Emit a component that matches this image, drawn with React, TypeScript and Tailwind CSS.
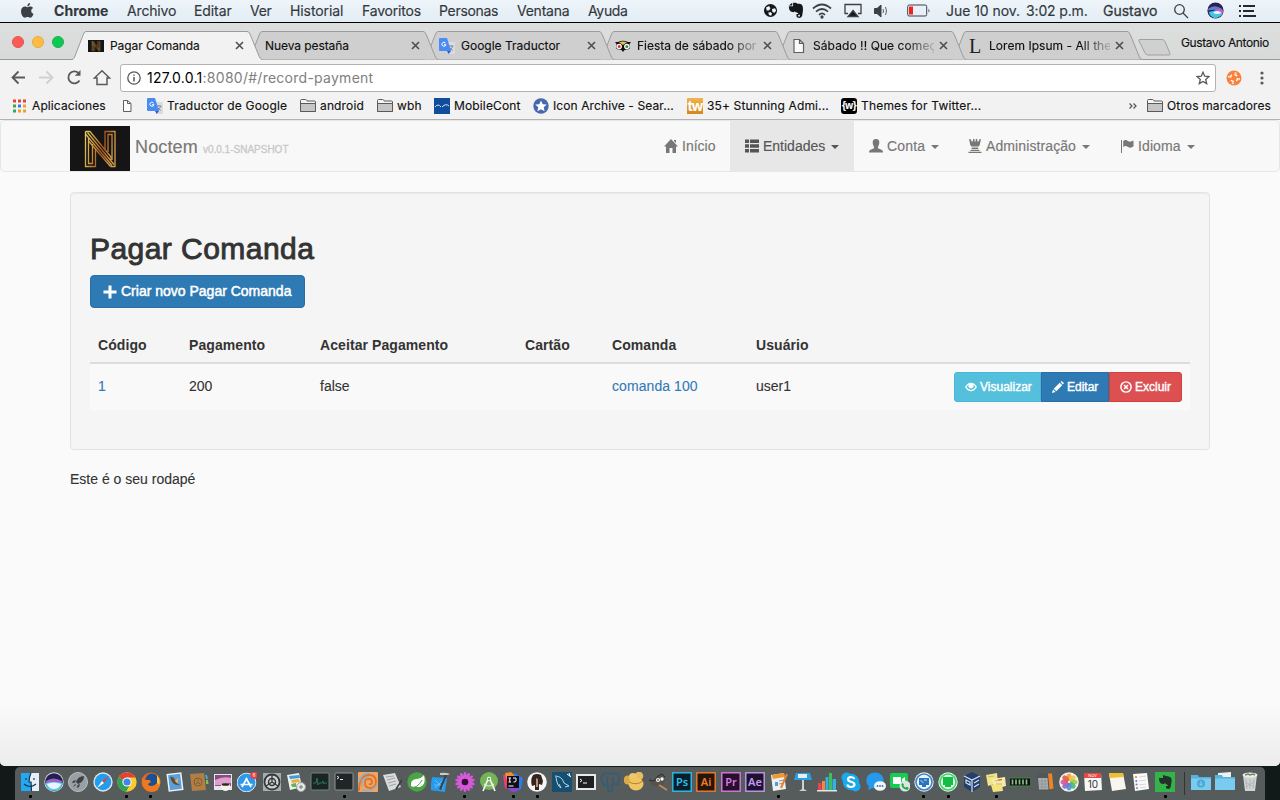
import React from "react";

type Kids = { children?: React.ReactNode };

/* ---------- shared drawing helpers ---------- */

function Ic({ s = 20, className = "", children }: Kids & { s?: number; className?: string }) {
  return (
    <svg width={s} height={s} viewBox="0 0 20 20" fill="none" className={"block shrink-0 " + className}>
      {children}
    </svg>
  );
}

function PageIcon() {
  return (
    <svg width="16" height="16" viewBox="0 0 16 16" className="block shrink-0" fill="#fafafa" stroke="#5f5f5f" strokeWidth="1.2">
      <path d="M3 1.500h5.500l4 4V14.500H3z M8.500 1.500v4h4" />
    </svg>
  );
}

function Folder() {
  return (
    <svg width="16" height="14" viewBox="0 0 16 14" className="block shrink-0" stroke="#5a5a5a">
      <path d="M.5 12.5v-11q0-1 1-1h4q1 0 1.300 1l.2.5h7.500q1 0 1 1v9.500z" fill="#f4f4f4" />
      <path d="M.5 12.500V4.500h15v8z" fill="#c6c6c6" />
    </svg>
  );
}

function Translate() {
  return (
    <svg width="16" height="16" viewBox="0 0 16 16" className="block shrink-0">
      <path d="M8 4h7q1 0 1 1v10q0 1-1 1h-5z" fill="#dcdcdc" />
      <path d="M9.500 8h5M12 7v1.200M13.800 8q-.8 3.200-3.500 4.500M10.300 9q1.500 2.700 3.500 3.500" stroke="#7690a8" fill="none" />
      <path d="M1 0h7l4 13H1q-1 0-1-1V1q0-1 1-1z" fill="#4b8bf5" />
      <path d="M8 13h4l-2.300 3z" fill="#3a55c8" />
      <path d="M6.500 5a2 2 0 1 0 .4 1.700H5" stroke="#fff" strokeWidth="1" fill="none" />
    </svg>
  );
}

function LogoN({ className }: { className: string }) {
  return (
    <svg viewBox="0 0 60 45" className={"block shrink-0 " + className}>
      <defs>
        <linearGradient id="gold" gradientUnits="userSpaceOnUse" x1="14" y1="5" x2="46" y2="12">
          <stop offset="0" stopColor="#ecd468" />
          <stop offset=".35" stopColor="#cf9a3e" />
          <stop offset=".65" stopColor="#a8561d" />
          <stop offset="1" stopColor="#d9a04b" />
        </linearGradient>
      </defs>
      <rect width="60" height="45" fill="#151515" />
      <g stroke="url(#gold)" strokeWidth="1.300" fill="none">
        <path d="M15.500 5.500V40.500H25.500V22" />
        <path d="M18.500 12V37.500H22.500V18" />
        <path d="M15.500 5.500H20L41 31V34" />
        <path d="M15.500 8L42 39.500M17.500 6.500L44 38.500M18.500 15L40.500 40.500" />
        <path d="M35 23V5.500H45V40.500H40.500" />
        <path d="M38 26V8.500H42V34" />
      </g>
    </svg>
  );
}

/* ---------- macOS menu bar ---------- */

function MenuBar() {
  return (
    <div className="flex h-[23px] items-center border-b border-black bg-gradient-to-b from-[#edf4fa] to-[#e4edf4] pb-[1px] pl-[20px] text-[14px] text-[#33383d] [-webkit-text-stroke:0.15px]">
      <svg width="34" height="17" viewBox="0 0 34 16" className="shrink-0" fill="#3b4045">
        <path d="M11.200 8.500c0-1.500 1-2.400 1.900-2.900-.8-1.200-2-1.500-2.800-1.500-1.200 0-2.200.7-2.800.7s-1.500-.7-2.500-.7C3 4.100 1 5.700 1 8.700c0 3.200 2.100 6.500 3.900 6.500.9 0 1.400-.6 2.600-.6s1.600.6 2.600.6c1.500 0 2.900-2.300 3.400-3.800-1.500-.6-2.300-1.700-2.300-2.900zM10 .5C8.500.7 7.200 2 7.400 3.700 9 3.700 10.200 2.200 10 .5z" />
      </svg>
      <span className="w-[73px] font-bold tracking-[0.05px]">Chrome</span>
      <span className="w-[67px] tracking-[-0.15px]">Archivo</span>
      <span className="w-[56px] tracking-[-0.1px]">Editar</span>
      <span className="w-[40px] tracking-[-0.3px]">Ver</span>
      <span className="w-[72px] tracking-[-0.1px]">Historial</span>
      <span className="w-[77px] tracking-[-0.2px]">Favoritos</span>
      <span className="w-[78px] tracking-[-0.3px]">Personas</span>
      <span className="w-[71px] tracking-[-0.25px]">Ventana</span>
      <span className="w-[175px] tracking-[-0.35px]">Ayuda</span>
      <Ic s={15} className="mr-[10px]">
        <circle cx="10" cy="10" r="8.700" fill="#15181b" />
        <path d="M4 6l4-2 2 3-2 3-3 0zM12 8l4-1 1.500 3-2 3-3-1zM7 13l3-1 2 2-1 3-3-1z" fill="#edf4fa" />
      </Ic>
      <Ic s={17} className="mr-[7px]">
        <path d="M6 1v4H1c0 5 2 7 6 7l1-1c1 2 4 1 4 3h-2v3c2 3 7 2 7-3 1-5 1-9-1-11-2-1-3-1-5-1-1-1-3-1-5-1zM5 1L1 4h4z" fill="#15181b" />
        <path d="M12 15h2v2h-2z" fill="#edf4fa" />
      </Ic>
      <svg width="20" height="16" viewBox="0 0 20 16" className="mr-[12px] shrink-0" fill="none" stroke="#3b4045" strokeWidth="1.700">
        <path d="M1 5.500q9-8 18 0M4 8.700q6-5.400 12 0M7 11.800q3-2.700 6 0" />
        <circle cx="10" cy="14" r=".8" fill="#3b4045" />
      </svg>
      <svg width="18" height="15" viewBox="0 0 18 15" className="mr-[12px] shrink-0" fill="none" stroke="#3b4045" strokeWidth="1.300">
        <path d="M4 10.500H1V1.500h16v9h-3" />
        <path d="M9 7.500l5 6H4z" fill="#15181b" />
      </svg>
      <svg width="16" height="14" viewBox="0 0 16 14" className="mr-[17px] shrink-0" fill="none" stroke="#3b4045">
        <path d="M.5 4.500h2.500l4-3.500v12l-4-3.500h-2.500z" fill="#3b4045" />
        <path d="M9 5q1 2 0 4M11.500 3q2 4 0 8" opacity=".8" />
      </svg>
      <svg width="24" height="13" viewBox="0 0 24 13" className="mr-[15px] shrink-0" fill="none" stroke="#3b4045">
        <rect x=".7" y="1" width="19" height="11" rx="1.500" />
        <path d="M2 2.500h4v8H2z" fill="#ee2424" stroke="none" />
        <path d="M21.500 4.500v4q1.800-2 0-4z" fill="#3b4045" stroke="none" />
      </svg>
      <span className="w-[80px] whitespace-nowrap tracking-[-0.05px]">Jue 10 nov.</span>
      <span className="w-[77px] whitespace-nowrap tracking-[-0.15px]">3:02 p.m.</span>
      <span className="w-[70px] [-webkit-text-stroke:0.3px]">Gustavo</span>
      <svg width="16" height="16" viewBox="0 0 16 16" className="mr-[18px] shrink-0" fill="none" stroke="#3b4045" strokeWidth="1.300">
        <circle cx="6.500" cy="6.500" r="4.800" />
        <path d="M10 10l5 5" />
      </svg>
      <Ic s={17}>
        <circle cx="10" cy="10" r="9.500" fill="#2a2350" />
        <path d="M1.500 8q7-6 16 0l1 2q-9-2-17 0z" fill="#5b7fd8" />
        <path d="M7 11q6-5 12-1l-1 5q-4 3-8 2z" fill="#c95fd0" />
        <path d="M2 12q7-3 16 1-2 5-8 6-6-1-8-7z" fill="#42c4e6" />
        <path d="M7 12.500q5-4 10 0-5 3-10 0z" fill="#eefaff" />
      </Ic>
      <svg width="20" height="14" viewBox="0 0 20 14" className="ml-[14px] shrink-0" stroke="#25292d" strokeWidth="1.800">
        <path d="M1 2h2M5 2h12M1 7h2M5 7h11M1 12h2M5 12h13" />
      </svg>
    </div>
  );
}

/* ---------- browser tabs ---------- */

function Close() {
  return (
    <svg width="9" height="9" viewBox="0 0 9 9" className="block shrink-0" stroke="#4f4f4f" strokeWidth="1.600">
      <path d="M1 1l7 7M8 1L1 8" />
    </svg>
  );
}

function Tab({ title, icon, active, fade, z, spacing = "" }: { title: string; icon?: React.ReactNode; active?: boolean; fade?: boolean; z: string; spacing?: string }) {
  return (
    <div className={"relative flex h-[29px] w-[176px] shrink-0 items-center pl-[16px] " + z}>
      <svg width="192" height="29" viewBox="0 0 192 29" className="absolute left-0 top-0">
        <path
          d="M0 28.500C2 28 2 27 3 25L11.500 3Q12.500.5 14 .5H175Q177 .5 178 3L187 25Q188 28 190 28.500"
          fill={active ? "#f2f2f2" : "#cfcfcf"}
          stroke="#9b9b9b"
        />
        {active && <path d="M1 28.500H189" stroke="#f2f2f2" />}
      </svg>
      <div className="relative flex w-full items-center">
        {icon && <div className={"flex w-[16px] justify-center " + (active ? "mr-[6px]" : "-ml-[1px] mr-[6px]")}>{icon}</div>}
        <span
          className={
            "whitespace-nowrap text-[12px] text-[#111] [-webkit-text-stroke:0.15px] " + spacing +
            (icon ? (active ? " w-[120px]" : " w-[121px]") : " ml-[1px] w-[141px]") +
            (fade ? " [mask-image:linear-gradient(to_right,black_92px,transparent_126px)]" : "")
          }
        >
          {title}
        </span>
        <span className="ml-[5px]"><Close /></span>
      </div>
    </div>
  );
}

const Owl = (
  <svg width="16" height="12" viewBox="0 0 16 12">
    <path d="M0 2h3q5-2.500 10 0h3l-1.500 2v5l-5 1L8 12l-1.500-2-5-1V4z" fill="#111" />
    <path d="M4 2.300q4-1.500 8 0L8 5z" fill="#e7c34e" />
    <circle cx="4.200" cy="6.500" r="2.700" fill="#fff" />
    <circle cx="11.800" cy="6.500" r="2.700" fill="#fff" />
    <circle cx="4.200" cy="6.500" r="1.500" fill="#d43c32" />
    <circle cx="11.800" cy="6.500" r="1.500" fill="#2f9456" />
  </svg>
);

function TabStrip() {
  return (
    <div className="flex h-[37px] items-end bg-gradient-to-b from-[#dddfdf] to-[#d8d9d9] shadow-[inset_0_-1px_0_#9b9b9b]">
      <div className="flex w-[72px] shrink-0 items-center gap-[8px] self-start pl-[12px] pt-[13px]">
        <i className="size-[12px] rounded-full border border-[#e8504c] bg-[#fc5b57]" />
        <i className="size-[12px] rounded-full border border-[#eaaa40] bg-[#fdbc40]" />
        <i className="size-[12px] rounded-full border border-[#10b64b] bg-[#0fc854]" />
      </div>
      <Tab z="z-[6]" active title="Pagar Comanda" spacing="tracking-[-0.08px]" icon={<LogoN className="h-[12px] w-[16px]" />} />
      <Tab z="z-[5]" title="Nueva pestaña" spacing="tracking-[-0.08px]" />
      <Tab z="z-[4]" title="Google Traductor" icon={<Translate />} />
      <Tab z="z-[3]" fade title="Fiesta de sábado por" icon={Owl} />
      <Tab z="z-[2]" fade title="Sábado !! Que começ" spacing="tracking-[0.08px]" icon={<PageIcon />} />
      <Tab z="z-[1]" fade title="Lorem Ipsum - All the" spacing="tracking-[0.04px]" icon={<span className="font-['Liberation_Serif',serif] text-[20px] leading-[18px] text-[#222]">L</span>} />
      <svg width="35" height="29" viewBox="0 0 35 29" className="ml-[10px] shrink-0">
        <path d="M2 8.500h22q2 0 3 2l5 12q.5 1.500-1 1.500H10q-2 0-3-2L1 10q-.6-1.500 1-1.500z" fill="#d0d0d0" stroke="#a0a0a0" />
      </svg>
      <span className="ml-[8px] self-start whitespace-nowrap pt-[12px] text-[12px] leading-[16px] tracking-[-0.38px] text-[#111] [-webkit-text-stroke:0.15px]">Gustavo Antonio</span>
    </div>
  );
}

/* ---------- toolbar and bookmarks ---------- */

function Toolbar() {
  return (
    <div className="flex h-[33px] items-center bg-[#f2f2f2] pl-[10px] pt-[2px]">
      <svg width="110" height="20" viewBox="0 0 110 20" className="shrink-0" fill="none" stroke="#5a5a5a" strokeWidth="1.800">
        <path d="M15 9.500H2.500M8.500 3.500l-6 6 6 6" />
        <path d="M29 9.500h13M36.500 3.500l6 6-6 6" stroke="#d0d0d0" />
        <path d="M69.500 12.500a6 6 0 1 1-1-7.500" />
        <path d="M70.500 2v5.700h-5.700z" fill="#5a5a5a" stroke="none" />
        <path d="M84.500 10L92 2.800 99.500 10H97v6.500H87V10z" strokeWidth="1.500" />
      </svg>
      <div className="flex h-[28px] w-[1096px] shrink-0 items-center rounded-[3px] border border-[#b2b2b2] bg-white pl-[6px]">
        <svg width="14" height="14" viewBox="0 0 14 14" fill="none" stroke="#555" strokeWidth="1.300">
          <circle cx="7" cy="7" r="6.200" />
          <path d="M7 6v4.500M7 3.500v1.300" strokeWidth="1.500" />
        </svg>
        <span className="ml-[6px] text-[14px] tracking-[0.26px] text-[#808080]">
          <span className="text-black">127.0.0.1</span>:8080/#/record-payment
        </span>
        <svg width="14" height="14" viewBox="0 0 14 14" className="ml-auto mr-[5px]" fill="none" stroke="#5a5a5a" strokeWidth="1.300">
          <path d="M7 1.200l1.700 4 4.300.4-3.300 2.800 1 4.200L7 10.400l-3.700 2.200 1-4.200L1 5.600l4.300-.4z" />
        </svg>
      </div>
      <svg width="16" height="16" viewBox="0 0 16 16" className="ml-[10px] shrink-0">
        <circle cx="8" cy="8" r="7.500" fill="#f9813a" />
        <circle cx="8" cy="8" r="3.600" fill="none" stroke="#fff" strokeWidth="1.500" strokeDasharray="3.150 2.500" />
        <circle cx="8" cy="8" r="5.300" fill="none" stroke="#fff" strokeWidth="1.200" strokeDasharray="2 6.330" />
      </svg>
      <svg width="4" height="14" viewBox="0 0 4 14" className="ml-[18px] shrink-0" fill="#5a5a5a">
        <circle cx="2" cy="2" r="1.600" />
        <circle cx="2" cy="7" r="1.600" />
        <circle cx="2" cy="12" r="1.600" />
      </svg>
    </div>
  );
}

function Mark({ icon, text, className }: { icon: React.ReactNode; text?: string; className: string }) {
  return (
    <div className={"flex shrink-0 items-center gap-[4px] whitespace-nowrap " + className}>
      {icon}
      <span>{text}</span>
    </div>
  );
}

function Bookmarks() {
  const colors = ["#ea4335", "#ea4335", "#ea4335", "#34a853", "#3178e6", "#f0a02c", "#34a853", "#f0a02c", "#f0a02c"];
  return (
    <div className="flex h-[27px] items-center border-b border-[#b3b3b3] bg-[#f2f2f2] pl-[12px] text-[12px] tracking-[0.14px] text-[#111] [-webkit-text-stroke:0.15px]">
      <Mark
        className="w-[107px] tracking-[0.1px]"
        text="Aplicaciones"
        icon={
          <svg width="16" height="14" viewBox="0 0 16 14">
            {colors.map((c, i) => (
              <rect key={i} x={1 + (i % 3) * 5} y={Math.floor(i / 3) * 5 + 0.5} width="3" height="3" fill={c} />
            ))}
          </svg>
        }
      />
      <Mark
        className="w-[28px]"
        icon={
          <svg width="16" height="14" viewBox="0 0 16 14" fill="#fafafa" stroke="#5f5f5f">
            <path d="M4.500 1.500h4l3.500 3v8h-7.500z M8.500 1.500v3H12" />
          </svg>
        }
      />
      <Mark className="w-[153px] tracking-[0.18px]" text="Traductor de Google" icon={<Translate />} />
      <Mark className="w-[77px]" text="android" icon={<Folder />} />
      <Mark className="w-[57px]" text="wbh" icon={<Folder />} />
      <Mark
        className="w-[99px]"
        text="MobileCont"
        icon={
          <svg width="16" height="16" viewBox="0 0 16 16">
            <path d="M0 0h16v16H0z" fill="#104d9c" />
            <path d="M1 9q3-4 6 0M8 9q4-4 7-1" stroke="#dbe7f5" fill="none" />
          </svg>
        }
      />
      <Mark
        className="w-[154px] tracking-[0.1px]"
        text="Icon Archive - Sear..."
        icon={
          <svg width="16" height="16" viewBox="0 0 16 16">
            <circle cx="8" cy="8" r="7.700" fill="#4767ae" />
            <path d="M8 2.500l1.700 3.700 4 .4-3 2.700.9 4L8 11.300l-3.600 2 .9-4-3-2.700 4-.4z" fill="#fff" />
          </svg>
        }
      />
      <Mark
        className="w-[154px]"
        text="35+ Stunning Admi..."
        icon={<span className="flex size-[16px] items-center justify-center bg-gradient-to-b from-[#efb450] to-[#d58718] font-['Liberation_Sans',sans-serif] text-[14px] font-bold leading-[16px] tracking-[-0.5px] text-white">tw</span>}
      />
      <Mark
        className="w-[286px] tracking-[0.18px]"
        text="Themes for Twitter..."
        icon={<span className="flex size-[16px] items-center justify-center rounded-[3px] bg-black font-['Liberation_Sans',sans-serif] text-[10px] font-bold leading-[16px] tracking-[-0.5px] text-white">{"{w}"}</span>}
      />
      <svg width="20" height="12" viewBox="0 0 20 12" fill="none" stroke="#5a5a5a" strokeWidth="1.300" className="shrink-0">
        <path d="M2.500 3.500L5 6 2.500 8.500M6.500 3.500L9 6 6.500 8.500" />
      </svg>
      <Mark className="" text="Otros marcadores" icon={<Folder />} />
    </div>
  );
}

/* ---------- application page ---------- */

function Glyph({ children, s = 14 }: Kids & { s?: number }) {
  return (
    <svg width={s} height={s} viewBox="0 0 14 14" className="block shrink-0" fill="currentColor">
      {children}
    </svg>
  );
}

function NavItem({ icon, text, caret = true, className }: { icon: React.ReactNode; text: string; caret?: boolean; className: string }) {
  return (
    <a className={"flex h-[50px] items-center pl-[14px] " + className}>
      {icon}
      <span className="ml-[4px]">{text}</span>
      {caret && <i className="ml-[6px] mt-[2px] border-x-4 border-t-4 border-x-transparent border-t-current" />}
    </a>
  );
}

function Navbar() {
  return (
    <nav className="flex h-[52px] justify-between rounded-[4px] border border-[#e7e7e7] bg-[#f8f8f8] px-[69px] text-[14px] text-[#777] [-webkit-text-stroke:0.15px]">
      <div className="flex items-start pt-[5px]">
        <LogoN className="h-[45px] w-[60px]" />
        <div className="flex items-baseline pl-[5px] pt-[7px]">
          <span className="text-[18px] leading-[28px] tracking-[0.15px]">Noctem</span>
          <span className="ml-[5px] text-[10px] text-[#c8c8c8] [-webkit-text-stroke:0.3px]">v0.0.1-SNAPSHOT</span>
        </div>
      </div>
      <div className="flex">
        <NavItem
          className="w-[81px]"
          caret={false}
          text="Início"
          icon={<span className="ml-[1px]"><Glyph><path d="M7 0l7 7.500h-2V14H8.500V9h-3v5H2V7.500H0zM10 1h2v3l-2-2z" /></Glyph></span>}
        />
        <NavItem
          className="w-[124px] bg-[#e7e7e7] text-[#555]"
          text="Entidades"
          icon={<span className="ml-[1px]"><Glyph><path d="M0 .5h4v3.500H0zM5 .5h9v3.500H5zM0 5.200h4v3.500H0zM5 5.200h9v3.500H5zM0 10h4v3.500H0zM5 10h9v3.500H5z" /></Glyph></span>}
        />
        <NavItem
          className="w-[100px] tracking-[0.2px]"
          text="Conta"
          icon={<span className="ml-[1px]"><Glyph><path d="M7 0c2.500 0 3.500 1.500 3.300 4-.2 2-1 3-1.300 3.800v1.500L13 11q1 .7 1 2.500H0q0-1.800 1-2.500l4-1.700V7.800C4.600 7 3.900 6 3.700 4 3.500 1.500 4.500 0 7 0z" /></Glyph></span>}
        />
        <NavItem
          className="w-[152px] tracking-[0.1px]"
          text="Administração"
          icon={<Glyph><path d="M1 0l2 .5.5 2h1.300L5 0h1.400l.2 2.500h1L7.800 0h1.400l.2 2.500h1.300l.5-2L13 0l-1.300 6-1 1.500h-7.400l-1-1.500zM4 8.500h6l.7 1.800H3.300zM2.500 11h9v1h-9zM.500 12.700h13V14H.5z" /></Glyph>}
        />
        <NavItem
          className="w-[104px] tracking-[0.1px]"
          text="Idioma"
          icon={<Glyph><path d="M1 1h1v13H1zM3.200 2q2.300-2 4.800 0 2 1.500 5.500-.5v6q-3 2-5.500.5-2.500-2-4.800 0z" /></Glyph>}
        />
      </div>
    </nav>
  );
}

const medium = "[-webkit-text-stroke:0.5px]";

function Content() {
  const btn = "flex h-[30px] items-center gap-[3px] border text-[12px] text-white [-webkit-text-stroke:0.4px] ";
  return (
    <main className="mx-[70px] mt-[20px] h-[258px] rounded-[4px] border border-[#e3e3e3] bg-[#f5f5f5] px-[19px] pt-[39px] text-[14px] text-[#333] shadow-[inset_0_1px_1px_rgba(0,0,0,0.05)]">
      <h2 className="text-[30px] leading-[33px] tracking-[0.45px] [-webkit-text-stroke:0.9px]">Pagar Comanda</h2>
      <button className={"mt-[10px] flex h-[33px] w-[215px] items-center rounded-[4px] border border-[#2e6da4] bg-[#2e7ab4] pl-[12px] text-[14px] text-white " + medium}>
        <svg width="14" height="14" viewBox="0 0 14 14" stroke="#fff" strokeWidth="3">
          <path d="M7 .5v13M.5 7h13" />
        </svg>
        <span className="ml-[4px] whitespace-nowrap">Criar novo Pagar Comanda</span>
      </button>
      <table className="mt-[20px] w-[1100px] table-fixed border-collapse text-left">
        <colgroup>
          <col className="w-[91px]" />
          <col className="w-[131px]" />
          <col className="w-[205px]" />
          <col className="w-[87px]" />
          <col className="w-[144px]" />
          <col />
          <col className="w-[244px]" />
        </colgroup>
        <thead>
          <tr className="h-[35px] border-b-2 border-[#ddd]">
            {["Código", "Pagamento", "Aceitar Pagamento", "Cartão", "Comanda", "Usuário", ""].map((h, i) => (
              <th key={i} className="px-[8px] pt-[1px] font-bold tracking-[0.08px]">{h}</th>
            ))}
          </tr>
        </thead>
        <tbody>
          <tr className="h-[47px] bg-[#f9f9f9] [-webkit-text-stroke:0.1px]">
            <td className="px-[8px] pb-[1px] text-[#337ab7]">1</td>
            <td className="px-[8px] pb-[1px]">200</td>
            <td className="px-[8px] pb-[1px]">false</td>
            <td />
            <td className="px-[8px] pb-[1px] tracking-[0.08px] text-[#337ab7]">comanda 100</td>
            <td className="px-[8px] pb-[1px]">user1</td>
            <td className="px-[8px] pb-[1px]">
              <div className="flex">
                <button className={btn + "w-[87px] rounded-l-[3px] border-[#46b8da] bg-[#54c0dc] pl-[10px]"}>
                  <Glyph s={12}>
                    <path fillRule="evenodd" d="M0 7q3-5 7-5t7 5q-3 5-7 5T0 7zm1.800 0q2 3.500 5.200 3.500T12.200 7Q11 5 9.800 4.200 11 8.500 7 8.800 3 8.500 4.200 4.200 3 5 1.800 7z" />
                    <circle cx="7" cy="6" r="1.600" />
                  </Glyph>
                  <span>Visualizar</span>
                </button>
                <button className={btn + "w-[68px] border-[#2e6da4] bg-[#2e7ab4] pl-[10px]"}>
                  <Glyph s={12}><path d="M0 14l1.200-4.200 3 3zM2 9l7-7 3 3-7 7zM10 1.300L11.300 0 14 2.700 12.700 4z" /></Glyph>
                  <span>Editar</span>
                </button>
                <button className={btn + "w-[73px] rounded-r-[3px] border-[#d43f3a] bg-[#dc5052] pl-[10px]"}>
                  <Glyph s={12}>
                    <circle cx="7" cy="7" r="6" fill="none" stroke="currentColor" strokeWidth="1.700" />
                    <path d="M4.700 4.700l4.600 4.600M9.300 4.700L4.700 9.300" stroke="currentColor" strokeWidth="1.800" />
                  </Glyph>
                  <span>Excluir</span>
                </button>
              </div>
            </td>
          </tr>
        </tbody>
      </table>
    </main>
  );
}

/* ---------- dock ---------- */

function Adobe({ t, c, bg }: { t: string; c: string; bg: string }) {
  return (
    <>
      <rect x=".8" y=".8" width="18.400" height="18.400" fill={bg} stroke={c} strokeWidth="1.400" />
      <text x="10" y="14" textAnchor="middle" fontSize="11" fontWeight="600" fontFamily="Noto Sans, sans-serif" fill={c}>{t}</text>
    </>
  );
}

const dock: React.ReactNode[] = [
  <><path d="M1 1h18v18H1z" fill="#e6eff7" /><path d="M1 1h10q-2 4-2 9h2l.5 9H1z" fill="#23a8f2" /><path d="M6 6v2M14 6v2M4 12q6 5 12 0M11 1q-2 4-2 9h2l.5 9" stroke="#17354f" strokeWidth="1.200" /></>,
  <><circle cx="10" cy="10" r="9.700" fill="#d9dce6" /><circle cx="10" cy="10" r="8.800" fill="#251e50" /><path d="M2 9q7-5 16 0l-1 4H3z" fill="#9a62c8" /><path d="M1.500 11q8-2 17 0-1 7.500-8.500 7.700T1.500 11z" fill="#58cbe6" /><path d="M3 12q7-3 14 0-2 5-7 5t-7-5z" fill="#e8f6fc" /></>,
  <><circle cx="10" cy="10" r="9.500" fill="#98a0a3" stroke="#bac0c2" /><path d="M16 4q-6 0-8 6l2 2q6-2 6-8zM8 8l-3 1-1 2 3-.5M12 12l-1 3-2 1 .5-3M7 12l-2 3 3-2z" fill="#3a4044" /></>,
  <><circle cx="10" cy="10" r="9.700" fill="#dfe5e9" /><circle cx="10" cy="10" r="8.300" fill="#229ceb" /><path d="M16 4l-7 5 2 2z" fill="#e93d35" /><path d="M4 16l5-7 2 2z" fill="#fff" /></>,
  <><circle cx="10" cy="10" r="9.700" fill="#f8cb33" /><path d="M10 10L1.600 5.200A9.700 9.700 0 0 1 18.500 5.500H10z" fill="#e04335" /><path d="M10 10L1.600 5.200A9.700 9.700 0 0 0 9 19.700l4-7z" fill="#2fa353" /><circle cx="10" cy="10" r="4.600" fill="#fff" /><circle cx="10" cy="10" r="3.600" fill="#4384ee" /></>,
  <><circle cx="10" cy="10" r="9.500" fill="#e2691d" /><circle cx="11" cy="8" r="6.500" fill="#1c4f94" /><path d="M1 5q1 3 4 3 4-1 5 2-3 1-3 3 5 3 10-3l2-4q2 14-9 14Q0 19 1 5z" fill="#f0781e" /><path d="M16 3q4 5 2 10l-2-2z" fill="#f9c33a" /></>,
  <><g transform="rotate(-7 10 10)"><path d="M2.500 1h15v18h-15z" fill="#eef3f7" /><path d="M4 2.500h12v15H4z" fill="#5b9fd9" /><path d="M6 4q4 1 4.500 5l4 5-5-1.500Q6 10 6 4z" fill="#6a4a2d" /><path d="M10 9l4-3-1.500 6z" fill="#d6b37a" /></g></>,
  <><path d="M1 2l14-1 2 17-14 1z" fill="#b07f45" /><path d="M16 3h2l1 4h-2z" fill="#4ba8d8" /><path d="M17 8h2l.5 4H17z" fill="#8dbb50" /><circle cx="9" cy="10" r="4" stroke="#855a2c" /><path d="M7 12q2-3 4 0M9 7.500v2" stroke="#855a2c" /></>,
  <><path d="M1 2h18v16H1z" fill="#e9e4ea" /><path d="M2 3h16v11H2z" fill="#8a4a86" /><path d="M2 8q8-4 16-2v5L8 13H2z" fill="#dca0cc" /><path d="M8 12h9v3q-1 4-4.500 4T8 15z" fill="#f2f2f2" /><ellipse cx="12.500" cy="12.500" rx="4" ry="1.300" fill="#3b2417" /></>,
  <><circle cx="9.500" cy="10.500" r="9.300" fill="#2e99ea" stroke="#dbe9f4" /><path d="M5 15l5-9M14 15L9 6M3.500 12.500h12" stroke="#fff" strokeWidth="1.700" /><circle cx="17" cy="3.200" r="3.600" fill="#ef3b3b" /><text x="17" y="5" fontSize="5" textAnchor="middle" fill="#fff">6</text></>,
  <><rect x="1" y="1" width="18" height="18" fill="#a6abae" /><circle cx="10" cy="10" r="7.500" fill="#d0d3d5" stroke="#34383a" strokeWidth="1.800" /><circle cx="10" cy="10" r="3.500" stroke="#34383a" strokeWidth="1.500" /><path d="M10 10V3M10 10l6 4M10 10l-6 4" stroke="#34383a" strokeWidth="1.300" /></>,
  <><path d="M1 3l12-2 3 14-12 3z" fill="#eef2ee" /><path d="M3 4l10-1 1 3-10 1z" fill="#3f9bdd" /><path d="M5 8l8-1 1 3-8 1z" fill="#efac3e" /><path d="M5 12l5-1v4H6z" fill="#62b457" /><circle cx="15" cy="15" r="4.500" fill="#e5e7e8" stroke="#9ca1a4" /><path d="M13 15h4M15 13v4" stroke="#777" /></>,
  <><rect x="1" y="1" width="18" height="17" rx="1" fill="#182522" stroke="#76817e" /><path d="M3 11h3l1-5 1 7 1-2h3l1-2 1 3 1-1h2" stroke="#348263" strokeWidth=".8" /></>,
  <><rect x="1" y="1" width="18" height="17" rx="1" fill="#222527" stroke="#8d9493" /><path d="M3 4l2 1.500L3 7M6 7.500h3" stroke="#eee" /></>,
  <><rect x="0" y="0" width="20" height="20" rx="1" fill="#efa563" /><path d="M1 19Q1 3 11 3q7 0 7 6.500T12 16q-5 0-5-5t4-4q3 0 3 3t-3 2" stroke="#e2712a" strokeWidth="1.800" /><path d="M1 10Q3 1 12 1M4 18q9 3 15-5M4 15Q3 6 11 5" stroke="#8fb0c8" strokeWidth="1.600" /></>,
  <><path d="M1 3l12-2 6 14-12 4z" fill="#dadcdc" /><path d="M4 5l8-1M5 8l8-2M6 11l8-2M7 14l7-2" stroke="#9da2a4" /><path d="M20 8l-6 9" stroke="#3a3e40" strokeWidth="1.600" /></>,
  <><circle cx="10" cy="10" r="9.700" fill="#4ba545" /><path d="M17 3q3 13-8 12-4 0-5-1Q3 8 9 7q5 0 8-4z" fill="#fff" /><path d="M3 16q8 0 12-8" stroke="#4ba545" /></>,
  <><path d="M1 5l15 1-2 14L-1 18z" fill="#289bea" /><path d="M4 8l8 8M12 8l-8 8M3 13h10" stroke="#77c2f5" strokeWidth=".8" /><path d="M9 2q6-2 10 1l-3 0-6 15-2-1 6-14z" fill="#3a4146" /><path d="M9 1q5-1 10 1l-2 1-8 0z" fill="#c7ccce" /></>,
  <>{Array.from({ length: 14 }, (_, i) => <ellipse key={i} cx="10" cy="4.500" rx="1.600" ry="4.500" fill="#d758dc" transform={`rotate(${i * 25.714} 10 10)`} />)}<circle cx="10" cy="10" r="3.300" fill="#33102f" /></>,
  <><circle cx="10" cy="9" r="9" fill="#75b356" /><path d="M10 5L4 19M10 5l6 14" stroke="#f4f4f4" strokeWidth="1.700" /><path d="M5 12q5 4 10 0" stroke="#e8e8e8" strokeWidth="1.200" /><circle cx="10" cy="7" r="2.200" fill="#f0f3ee" /><circle cx="10" cy="7" r="1" fill="#5b8a44" /></>,
  <><path d="M0 3l9-2 2 12-9 4z" fill="#ee3d6e" /><path d="M2 1l6-1 4 4-9 3z" fill="#f28b3a" /><path d="M11 1l9 5-2 11-7 3z" fill="#2e7cea" /><path d="M2 14l7 6 7-2-5-5z" fill="#9345d2" /><path d="M4 4h12v12H4z" fill="#100e16" /><path d="M5.500 6h2.500M6.800 6v4M5.500 10h2.500M10 6h3v3q0 1.200-2.500 1M5.500 14h5" stroke="#fff" /></>,
  <><circle cx="10" cy="10" r="9.800" fill="#f7f5f2" /><path d="M6 3q4-2 8 0l2 6-1 4-3-1v6H8v-5l-3 1q-2-6 1-11z" fill="#33251f" /><path d="M9 6l2 1v8H9z" fill="#b39478" /></>,
  <><rect x="0" y="0" width="20" height="20" rx="1" fill="#154f72" /><path d="M3 4q7 0 9 7l5 3-4 1M4 5q1 9 5 11M7 12l2 4" stroke="#b8d6e3" /><path d="M15 2l4 3M17 1l1 3" stroke="#fff" /></>,
  <><rect x="0" y="2" width="20" height="16" fill="#e8e8e8" /><rect x="2" y="4" width="16" height="12" fill="#1e2122" /><path d="M4 7l2 1.500L4 10M7 11h4" stroke="#fff" /></>,
  <><path d="M3 2q5-2 7 0 6-2 9 1 1 5-2 9M3 2q-4 4 1 11l4 1M8 4q-2 5 0 9v6l4 1v-7q2-4 0-8M14 12l5 1" stroke="#2c5d7d" strokeWidth="1.400" /></>,
  <><circle cx="4" cy="8" r="4.500" fill="#dba94a" /><circle cx="15" cy="4" r="4.300" fill="#e7bd60" /><circle cx="9" cy="5" r="4" fill="#efc76b" /><ellipse cx="12" cy="12" rx="7.500" ry="6.500" fill="#efc462" /><path d="M5 10q7 4 14-1" stroke="#b98229" /></>,
  <><path d="M1 8l5 1 4-5 4-2 3 3-1 7-6 3-7-2z" fill="#56524c" /><path d="M1 8l5 1 4-5 4-2 3 3" stroke="#2e2b28" /><path d="M11 13l8 5" stroke="#c28952" strokeWidth="2" /><circle cx="10" cy="8" r="2" fill="#fff" /><circle cx="14" cy="7" r="1.700" fill="#fff" /><circle cx="10" cy="8" r=".8" fill="#111" /></>,
  <Adobe t="Ps" c="#2cc1e8" bg="#0b1e2b" />,
  <Adobe t="Ai" c="#ef7b31" bg="#281509" />,
  <Adobe t="Pr" c="#d67be0" bg="#27102c" />,
  <Adobe t="Ae" c="#c59bec" bg="#1d1232" />,
  <><path d="M2 3l13-2 2 16-13 2z" fill="#eff0ee" /><path d="M3 3l12-2 .6 4L4 7z" fill="#f19731" /><path d="M6 10h3v4H6z" fill="#4a9ddb" /><path d="M10 9l5-1M10 12l5-1" stroke="#999" /><path d="M18 2l-6 14" stroke="#e8802d" strokeWidth="2" /></>,
  <><path d="M3 1h14l2 7H1z" fill="#2b9fe4" /><path d="M5 2h9v4H5z" fill="#e5eef3" /><path d="M9 8h2v9l3 2H6l3-2z" fill="#cad1d4" /></>,
  <><path d="M1 18v-7h3.500v7z" fill="#f23d5a" /><path d="M5 18v-9h3v9z" fill="#f28a2c" /><path d="M8.500 18V5h3v13z" fill="#3ba9ea" /><path d="M12 18V1h3v17z" fill="#38c25a" /><path d="M15.500 18V7H19v11z" fill="#30b4dd" /><path d="M0 18h20v1.500H0z" fill="#e3e6e6" /></>,
  <><circle cx="10" cy="10" r="8.300" fill="#18a9ec" /><circle cx="5.500" cy="5.500" r="5" fill="#18a9ec" /><circle cx="14.500" cy="14.500" r="5" fill="#18a9ec" /><path d="M13.500 7q-1-2-3.700-2Q7 5.300 7 7.200 7 9 10 9.800q3.500.8 3.500 3Q13 15 10 15q-3 0-3.700-2.500" stroke="#fff" strokeWidth="2.200" /></>,
  <><ellipse cx="9" cy="8.500" rx="8.800" ry="8" fill="#2599ee" /><path d="M3 14l-1 4 5-2z" fill="#2599ee" /><ellipse cx="14" cy="14" rx="6" ry="4.800" fill="#f3f7fa" /><circle cx="11.500" cy="14" r=".9" fill="#3a6fae" /><circle cx="14" cy="14" r=".9" fill="#3a6fae" /><circle cx="16.500" cy="14" r=".9" fill="#3a6fae" /></>,
  <><rect x="0" y="1" width="18" height="15" rx="2" fill="#12cf52" /><path d="M3 5h8v7H3zM12 7l3-2v6l-3-2z" fill="#fff" /><circle cx="15" cy="14" r="5.500" fill="#dfe4e3" /><path d="M12 12q1 5 6 5M12 11.500l1.500 2M16 15.500l2.500 1" stroke="#12af48" strokeWidth="1.500" /></>,
  <><circle cx="10" cy="10" r="9.700" fill="#eef5fa" /><circle cx="10" cy="10" r="8" stroke="#3b83cb" strokeWidth="1.600" /><path d="M5 6h10v7H5zM8 13h4v2H8z" fill="#2d74bd" /><path d="M6.500 8l3 3M10 8h3" stroke="#b9dcf5" /></>,
  <><circle cx="10" cy="10" r="9.700" fill="#ebf8ee" /><circle cx="10" cy="10" r="8" stroke="#31dc62" strokeWidth="1.600" /><path d="M5 5h10v8H5zM7 13h6v2H7z" fill="#12bf42" /></>,
  <><path d="M10 0l8 4v11l-8 5-8-5V4z" fill="#253f6c" /><path d="M2 4l8 4 8-4M10 8v12M4 8l4 2v3l-4-2zM12 11l5-3M12 15l5-3" stroke="#d6e3f2" strokeWidth="1.200" /></>,
  <><path d="M0 3l11-2 1 10-10 3z" fill="#f1e58a" /><path d="M6 7l13-2 1 9-12 3z" fill="#f6ecaa" /><path d="M5 13l11-1 1 7-10 1z" fill="#f2e47b" /><path d="M2 5l6-1M9 9l7-1M10 12h6" stroke="#c9bc62" /><path d="M12 8l4-.5" stroke="#e85a3b" /></>,
  <><rect x="-.5" y="6" width="21" height="8" fill="#0b110b" stroke="#3c8a3c" /><path d="M2.500 7.500v5M6 7.500v5M9.500 7.500v5M13 7.500v5M16.500 7.500v5" stroke="#8fb88f" strokeWidth="1.700" /></>,
  <><path d="M2 1l12 0 2 18-13-1z" fill="#515658" /><path d="M13 1.500h4l1.500 15-4 1z" fill="#ee8427" /><path d="M3 6h9.500l1 11.500H4z" fill="#a9aeb0" /><path d="M4 9h9M4 12h9M4 15h9M7 6v11M10 6v11" stroke="#8b9092" strokeWidth=".7" /></>,
  <><circle cx="10" cy="10" r="9.800" fill="#f4f4f2" />{["#f5a52e", "#ecc940", "#9ccb4a", "#4ab680", "#4a93d9", "#8a6ac2", "#cc5ba3", "#e95948"].map((c, i) => <ellipse key={c} cx="10" cy="5.300" rx="2.600" ry="3.800" fill={c} opacity=".9" transform={`rotate(${i * 45} 10 10)`} />)}</>,
  <><path d="M1 2l17-1 1 17-17 1z" fill="#f7f7f7" /><path d="M1 1h17v5H1z" fill="#e74743" /><text x="9.500" y="5" fontSize="4" textAnchor="middle" fill="#fff">NOV</text><text x="10" y="16" fontSize="10" textAnchor="middle" fill="#333">10</text></>,
  <><path d="M2 2l14-1 3 16-14 2z" fill="#f9f7ed" /><path d="M2 1h14l.5 4L3 6z" fill="#f2bd33" /></>,
  <><path d="M2 2l14-1 2 16-14 2z" fill="#fafafa" /><path d="M8 5l7-1M8 9l7-1M8 13l7-1M9 16l6-1" stroke="#d6d6d6" /><circle cx="5" cy="5" r="1.100" fill="#ec7d37" /><circle cx="5.300" cy="9" r="1.100" fill="#3c8ee8" /><circle cx="5.600" cy="12.500" r="1.100" fill="#b35bd2" /><circle cx="6" cy="16" r="1.100" fill="#5cbe4a" /></>,
  <><rect x="0" y="0" width="20" height="20" fill="#33b44b" /><path d="M8 3v3H4c0 5 2 6 5 6l1-1c1 2 3 1 3 3h-2v2c2 2 5 1 5-3 1-4 1-7-1-8-2-1-5-1-7-2z" fill="#253029" /></>,
];

const running = [0, 4, 5, 13, 18, 20, 21, 31, 37, 38, 40, 47];

function DockFolder({ docs }: { docs?: boolean }) {
  return (
    <>
      {docs && <path d="M3 1l13-1v6H3z" fill="#eef0f1" />}
      <path d="M0 18V3h7l1 2h12v13z" fill="#56b3dd" />
      <path d="M0 18V6.500h20V18z" fill="#79cbef" />
      {!docs && <><circle cx="10" cy="11.500" r="4" fill="#4ba5cf" /><path d="M10 9v4M8 11.500l2 2 2-2" stroke="#8fd5f2" /></>}
    </>
  );
}

function Dock() {
  return (
    <footer className="flex h-[33px] shrink-0 items-start rounded-t-[5px] bg-[#555c5b] pl-[3px]">
      {dock.map((icon, i) => (
        <div key={i} className="flex w-[24.170px] shrink-0 flex-col items-center pt-[5px]">
          <Ic s={20}>{icon}</Ic>
          {running.includes(i) && <i className="mt-[3px] size-[3px] rounded-[1px] bg-black" />}
        </div>
      ))}
      <i className="ml-[6px] mr-[6px] mt-[5px] h-[23px] w-px bg-[#2f3534]" />
      <div className="flex gap-[4.500px] pt-[5px]">
        <Ic><DockFolder /></Ic>
        <Ic><DockFolder docs /></Ic>
        <Ic>
          <path d="M3 3h14l-2 16H5z" fill="#cfd3d3" />
          <ellipse cx="10" cy="3" rx="7.500" ry="2.600" fill="#eceeee" />
          <path d="M5 3l3-1 2 1 3-1 2 1" stroke="#70885f" strokeWidth="1.500" />
          <path d="M6 7l1 10M10 7v10M14 7l-1 10M5 10l9 5M15 9l-9 6" stroke="#a8adad" strokeWidth=".7" />
        </Ic>
      </div>
    </footer>
  );
}

export default function App() {
  return (
    <div className="flex h-[800px] w-[1280px] flex-col overflow-hidden bg-[#111a18] font-['Inter',sans-serif]">
      <MenuBar />
      <div className="flex h-[743px] shrink-0 flex-col overflow-hidden rounded-b-[5px] bg-[#fafafa]">
        <TabStrip />
        <Toolbar />
        <Bookmarks />
        <div className="flex grow flex-col bg-gradient-to-b from-[#fafafa] from-90% to-[#ececec] font-['Liberation_Sans',Arial,sans-serif]">
          <Navbar />
          <Content />
          <p className="ml-[70px] mt-[19px] text-[14px] leading-[20px] text-[#333] [-webkit-text-stroke:0.1px]">Este é o seu rodapé</p>
        </div>
      </div>
      <div className="h-[34px] shrink-0 bg-[#111a18] px-[15px] pt-[1px]">
        <Dock />
      </div>
    </div>
  );
}
